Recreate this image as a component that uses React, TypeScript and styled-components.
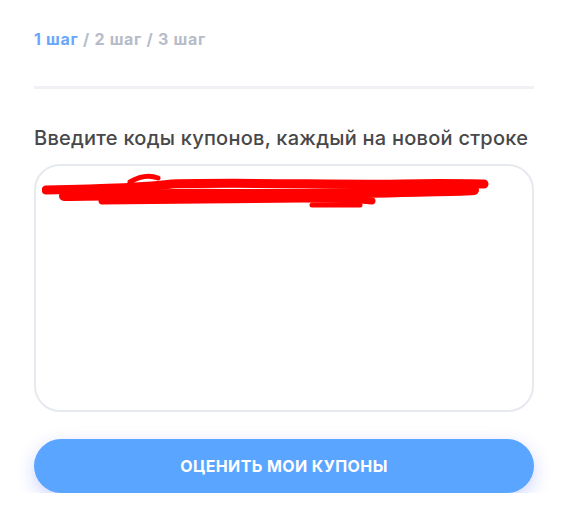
import React, { useState } from "react";
import styled, { createGlobalStyle } from "styled-components";

const GlobalStyle = createGlobalStyle`
  html, body { margin: 0; padding: 0; background: #fff; }
  body { font-family: Inter, "Noto Sans", Arial, sans-serif; }
`;

export default function App() {
  const [codes, setCodes] = useState("");

  return (
    <>
      <GlobalStyle />
      <Page>
        <Steps>
          <Step active>1 шаг</Step> / <Step>2 шаг</Step> / <Step>3 шаг</Step>
        </Steps>
        <Divider />
        <Label>Введите коды купонов, каждый на новой строке</Label>
        <AreaWrap>
          <TextArea value={codes} onChange={(e) => setCodes(e.target.value)} />
          {/* закрашенный код */}
          <Scribble viewBox="0 0 460 44" width="460" height="44">
            <path
              d="M4 18 C 60 17, 100 16, 130 12 C 200 10, 300 13, 360 12 C 400 11, 430 12, 442 12"
              stroke="#ff0000" strokeWidth="9" fill="none" strokeLinecap="round"
            />
            <path
              d="M22 24 C 80 24, 130 21, 180 22 C 240 22, 300 22, 360 20 C 400 19, 420 19, 432 18"
              stroke="#ff0000" strokeWidth="10" fill="none" strokeLinecap="round"
            />
            <path
              d="M60 29 C 120 28, 200 28, 260 27 C 300 27, 320 28, 330 29"
              stroke="#ff0000" strokeWidth="7" fill="none" strokeLinecap="round"
            />
            <path
              d="M88 10 C 98 4, 108 3, 116 6 M270 33 L 318 33"
              stroke="#ff0000" strokeWidth="5" fill="none" strokeLinecap="round"
            />
          </Scribble>
        </AreaWrap>
        <SubmitButton type="button">Оценить мои купоны</SubmitButton>
      </Page>
    </>
  );
}

const Page = styled.div`
  width: 500px;
  padding: 29px 0 0 34px;
  display: flex;
  flex-direction: column;
`;

const Steps = styled.div`
  font-size: 16px;
  line-height: 20px;
  font-weight: 700;
  letter-spacing: 0.7px;
  color: #b6bcc8;
`;

const Step = styled.span<{ active?: boolean }>`
  color: ${(p) => (p.active ? "#6aa7fb" : "#b6bcc8")};
`;

const Divider = styled.div`
  height: 3px;
  background: #eff1f5;
  margin-top: 37px;
`;

const Label = styled.div`
  margin-top: 36px;
  font-size: 20px;
  line-height: 26px;
  font-weight: 500;
  letter-spacing: 0.25px;
  color: #48484a;
`;

const AreaWrap = styled.div`
  position: relative;
  margin-top: 13px;
`;

const TextArea = styled.textarea`
  box-sizing: border-box;
  display: block;
  width: 100%;
  height: 248px;
  border: 2px solid #e6e9ee;
  border-radius: 26px;
  resize: none;
  outline: none;
  padding: 16px 20px;
  font-family: inherit;
  font-size: 15px;
  background: #fff;
`;

const Scribble = styled.svg`
  position: absolute;
  left: 8px;
  top: 8px;
  pointer-events: none;
`;

const SubmitButton = styled.button`
  margin-top: 27px;
  height: 54px;
  width: 100%;
  border: none;
  border-radius: 27px;
  background: #5aa5ff;
  color: #fff;
  font-family: inherit;
  font-size: 16px;
  font-weight: 700;
  letter-spacing: 0.4px;
  text-transform: uppercase;
  box-shadow: 0 6px 18px rgba(80, 100, 255, 0.28);
  cursor: pointer;
`;
